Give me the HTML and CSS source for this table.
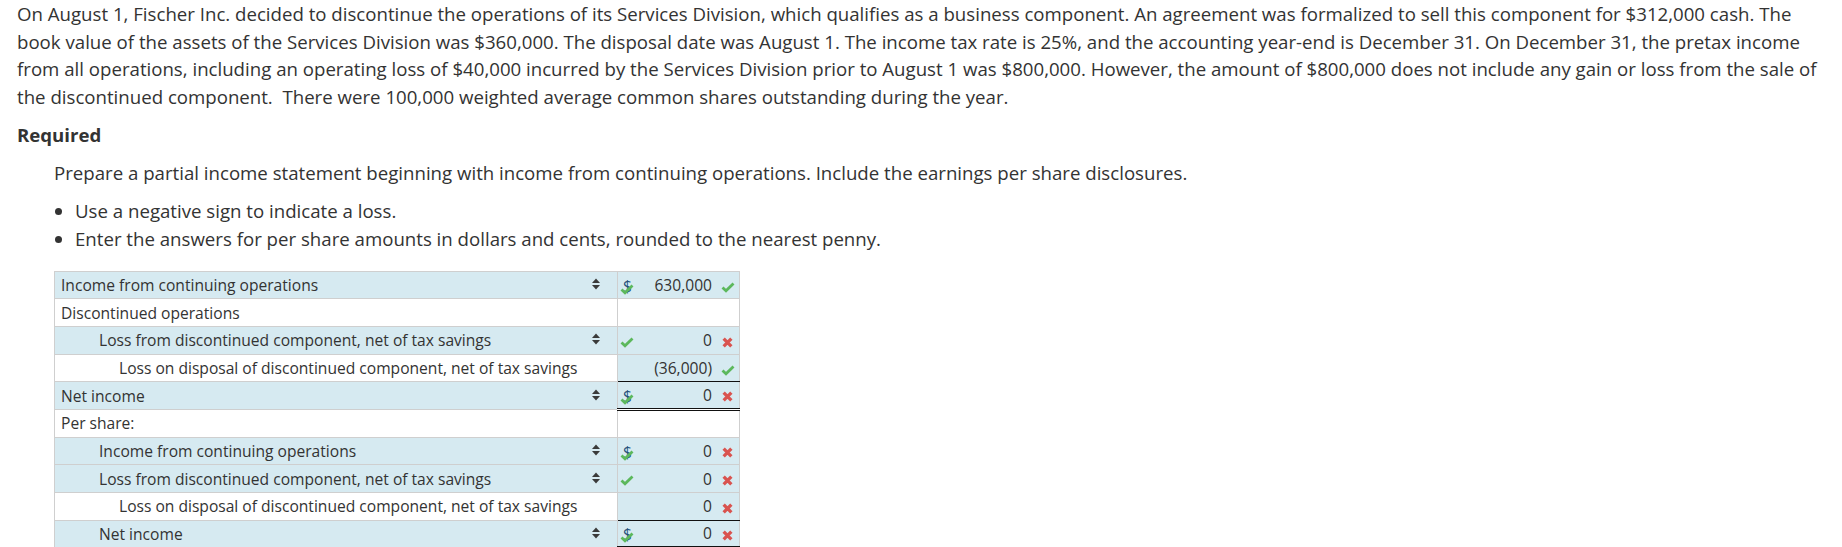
FILE: index.html
```html
<!DOCTYPE html>
<html>
<head>
<meta charset="utf-8">
<link rel="stylesheet" href="styles.css">
</head>
<body>
<div class="page">
  <p class="intro">On August 1, Fischer Inc. decided to discontinue the operations of its Services Division, which qualifies as a business component. An agreement was formalized to sell this component for $312,000 cash. The book value of the assets of the Services Division was $360,000. The disposal date was August 1. The income tax rate is 25%, and the accounting year-end is December 31. On December 31, the pretax income from all operations, including an operating loss of $40,000 incurred by the Services Division prior to August 1 was $800,000. However, the amount of $800,000 does not include any gain or loss from the sale of the discontinued component.&nbsp; There were 100,000 weighted average common shares outstanding during the year.</p>
  <h3 class="req">Required</h3>
  <div class="task">
    <p class="prep">Prepare a partial income statement beginning with income from continuing operations. Include the earnings per share disclosures.</p>
    <ul class="bullets">
      <li>Use a negative sign to indicate a loss.</li>
      <li>Enter the answers for per share amounts in dollars and cents, rounded to the nearest penny.</li>
    </ul>
    <table class="stmt">
      <tr>
        <td class="lbl blue"><span>Income from continuing operations</span><svg class="spin" viewBox="0 0 8 12"><polygon points="0,5 4,0.5 8,5"/><polygon points="0,7 8,7 4,11.5"/></svg></td>
        <td class="val blue"><span class="ico"><span class="dollar">$</span><svg class="ok over" viewBox="0 0 14 12"><path d="M1.5 6.5 L5 9.8 L12.5 2.5"/></svg></span><span class="num">630,000</span><svg class="ok mark" viewBox="0 0 14 12"><path d="M1.5 6.5 L5 9.8 L12.5 2.5"/></svg></td>
      </tr>
      <tr>
        <td class="lbl"><span>Discontinued operations</span></td>
        <td class="val"></td>
      </tr>
      <tr>
        <td class="lbl blue i1"><span>Loss from discontinued component, net of tax savings</span><svg class="spin" viewBox="0 0 8 12"><polygon points="0,5 4,0.5 8,5"/><polygon points="0,7 8,7 4,11.5"/></svg></td>
        <td class="val blue"><span class="ico"><svg class="ok" viewBox="0 0 14 12"><path d="M1.5 6.5 L5 9.8 L12.5 2.5"/></svg></span><span class="num">0</span><svg class="bad mark" viewBox="0 0 10 10"><path d="M1.5 1.5 L8.5 8.5 M8.5 1.5 L1.5 8.5"/></svg></td>
      </tr>
      <tr>
        <td class="lbl i2"><span>Loss on disposal of discontinued component, net of tax savings</span></td>
        <td class="val blue under"><span class="ico"></span><span class="num">(36,000)</span><svg class="ok mark" viewBox="0 0 14 12"><path d="M1.5 6.5 L5 9.8 L12.5 2.5"/></svg></td>
      </tr>
      <tr>
        <td class="lbl blue"><span>Net income</span><svg class="spin" viewBox="0 0 8 12"><polygon points="0,5 4,0.5 8,5"/><polygon points="0,7 8,7 4,11.5"/></svg></td>
        <td class="val blue dbl"><span class="ico"><span class="dollar">$</span><svg class="ok over" viewBox="0 0 14 12"><path d="M1.5 6.5 L5 9.8 L12.5 2.5"/></svg></span><span class="num">0</span><svg class="bad mark" viewBox="0 0 10 10"><path d="M1.5 1.5 L8.5 8.5 M8.5 1.5 L1.5 8.5"/></svg></td>
      </tr>
      <tr>
        <td class="lbl"><span>Per share:</span></td>
        <td class="val"></td>
      </tr>
      <tr>
        <td class="lbl blue i1"><span>Income from continuing operations</span><svg class="spin" viewBox="0 0 8 12"><polygon points="0,5 4,0.5 8,5"/><polygon points="0,7 8,7 4,11.5"/></svg></td>
        <td class="val blue"><span class="ico"><span class="dollar">$</span><svg class="ok over" viewBox="0 0 14 12"><path d="M1.5 6.5 L5 9.8 L12.5 2.5"/></svg></span><span class="num">0</span><svg class="bad mark" viewBox="0 0 10 10"><path d="M1.5 1.5 L8.5 8.5 M8.5 1.5 L1.5 8.5"/></svg></td>
      </tr>
      <tr>
        <td class="lbl blue i1"><span>Loss from discontinued component, net of tax savings</span><svg class="spin" viewBox="0 0 8 12"><polygon points="0,5 4,0.5 8,5"/><polygon points="0,7 8,7 4,11.5"/></svg></td>
        <td class="val blue"><span class="ico"><svg class="ok" viewBox="0 0 14 12"><path d="M1.5 6.5 L5 9.8 L12.5 2.5"/></svg></span><span class="num">0</span><svg class="bad mark" viewBox="0 0 10 10"><path d="M1.5 1.5 L8.5 8.5 M8.5 1.5 L1.5 8.5"/></svg></td>
      </tr>
      <tr>
        <td class="lbl i2"><span>Loss on disposal of discontinued component, net of tax savings</span></td>
        <td class="val blue under"><span class="ico"></span><span class="num">0</span><svg class="bad mark" viewBox="0 0 10 10"><path d="M1.5 1.5 L8.5 8.5 M8.5 1.5 L1.5 8.5"/></svg></td>
      </tr>
      <tr>
        <td class="lbl blue i1"><span>Net income</span><svg class="spin" viewBox="0 0 8 12"><polygon points="0,5 4,0.5 8,5"/><polygon points="0,7 8,7 4,11.5"/></svg></td>
        <td class="val blue dbl"><span class="ico"><span class="dollar">$</span><svg class="ok over" viewBox="0 0 14 12"><path d="M1.5 6.5 L5 9.8 L12.5 2.5"/></svg></span><span class="num">0</span><svg class="bad mark" viewBox="0 0 10 10"><path d="M1.5 1.5 L8.5 8.5 M8.5 1.5 L1.5 8.5"/></svg></td>
      </tr>
    </table>
  </div>
</div>
</body>
</html>
```

FILE: styles.css
```css
html, body {
  margin: 0;
  padding: 0;
  background: #fff;
}
body {
  font-family: "Open Sans", "Liberation Sans", sans-serif;
  color: #333;
}
.page {
  padding: 0 17px;
}
.intro {
  margin: 0;
  font-size: 18.65px;
  line-height: 27.67px;
}
.req {
  margin: 10px 0 0;
  font-size: 18.65px;
  line-height: 27.67px;
  font-weight: 700;
}
.task {
  padding-left: 37px;
}
.prep {
  margin: 11px 0 0;
  font-size: 18.65px;
  line-height: 27.67px;
}
.bullets {
  margin: 10px 0 0;
  padding-left: 21px;
  font-size: 18.65px;
  line-height: 28.3px;
}
.stmt {
  margin-top: 17px;
  border-collapse: collapse;
  font-size: 15.6px;
}
.stmt tr {
  height: 27.67px;
}
.stmt td {
  border: 1px solid #cfcfcf;
  padding: 0;
  white-space: nowrap;
}
.lbl {
  width: 539px;
  padding: 0 17px 0 6px !important;
}
.lbl span {
  display: inline-block;
}
.lbl.i1 span { padding-left: 38px; }
.lbl.i2 span { padding-left: 58px; }
.blue {
  background: #d6eaf1;
}
.spin {
  float: right;
  width: 8px;
  height: 12px;
  margin-top: 4px;
  fill: #3a3a3a;
}
.val {
  width: 113px;
  padding: 0 4px 0 2px !important;
}
.val.under { border-bottom: 1px solid #111 !important; }
.val.dbl { border-bottom: 3px double #111 !important; }
.ico {
  display: inline-block;
  position: relative;
  width: 14px;
  height: 14px;
  vertical-align: middle;
}
.dollar {
  position: absolute;
  left: 3px;
  top: -4px;
  font-size: 15.5px;
  color: #23507a;
  line-height: 20px;
}
.ok {
  fill: none;
  stroke: #5cb85c;
  stroke-width: 2.8;
  width: 14px;
  height: 12px;
}
.ico .ok { position: absolute; left: 0; top: 1px; }
.ico .ok.over { top: 3px; }
.num {
  display: inline-block;
  width: 78px;
  text-align: right;
}
.mark {
  display: inline-block;
  vertical-align: middle;
  margin-left: 9px;
}
.bad {
  fill: none;
  stroke: #d9534f;
  stroke-width: 3;
  width: 11px;
  height: 11px;
  margin-left: 10px;
}
```
